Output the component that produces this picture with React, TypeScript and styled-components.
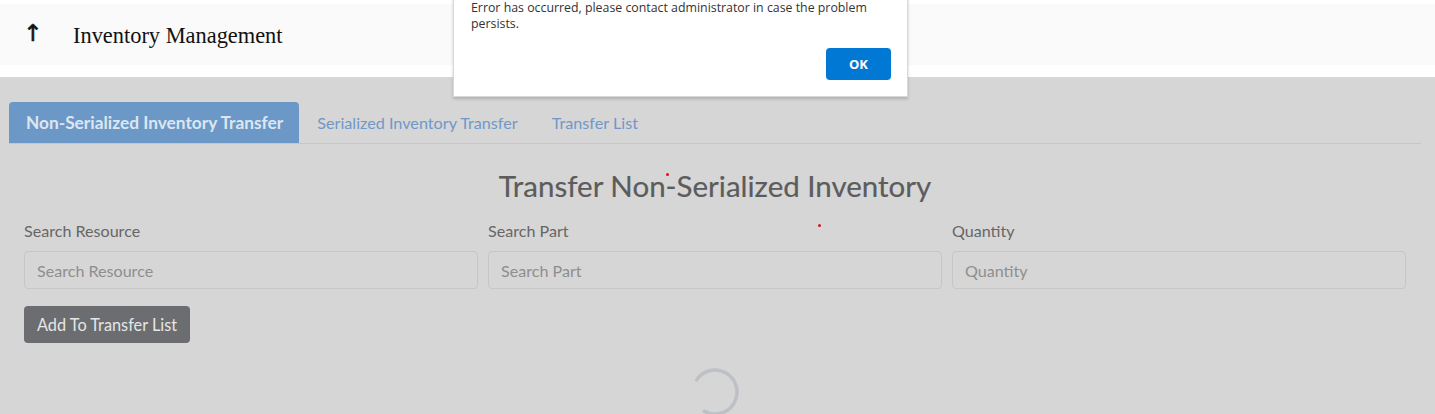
import React from "react";
import styled, { createGlobalStyle } from "styled-components";

const Global = createGlobalStyle`
  html, body { margin: 0; padding: 0; background: #ffffff; overflow: hidden; }
  body { font-family: Lato, "Noto Sans", sans-serif; }
  * { box-sizing: border-box; }
`;

const Page = styled.div`
  position: relative;
  width: 1435px;
  height: 414px;
  overflow: hidden;
  background: #ffffff;
  padding-top: 4px;
`;

const Header = styled.header`
  height: 61px;
  background: #fafafa;
  display: flex;
  align-items: center;
  padding-left: 23px;
  gap: 34px;
  font-family: "Liberation Serif", "DejaVu Serif", serif;
  color: #111;
`;

const BackArrow = styled.span`
  font-family: "DejaVu Sans", sans-serif;
  font-size: 23px;
  line-height: 1;
  width: 16px;
  margin-top: -3px;
  -webkit-text-stroke: 0.6px #111;
`;

const HeaderTitle = styled.h1`
  margin: 2px 0 0;
  font-size: 22.4px;
  font-weight: 400;
`;

const Spacer = styled.div`
  height: 12px;
`;

const Main = styled.main`
  background: #d6d6d6;
  height: 337px;
  padding: 25px 14px 0 9px;
`;

const TabBar = styled.nav`
  display: flex;
  align-items: flex-end;
  border-bottom: 1px solid #c6c6c6;
  height: 42px;
`;

const Tab = styled.div<{ $active?: boolean }>`
  height: 41px;
  display: flex;
  align-items: center;
  padding: 0 ${(p) => (p.$active ? "16px 0 17px" : "17px")};
  border-radius: 4px 4px 0 0;
  font-size: ${(p) => (p.$active ? "17.3px" : "16.2px")};
  font-weight: ${(p) => (p.$active ? 700 : 400)};
  background: ${(p) => (p.$active ? "#6c98c7" : "transparent")};
  color: ${(p) => (p.$active ? "#dde6f0" : "#6f98c9")};
  margin-right: ${(p) => (p.$active ? "1px" : "0")};
`;

const Content = styled.section`
  padding: 0 15px;
`;

const Title = styled.h2`
  margin: 24px 0 17px;
  text-align: center;
  font-size: 29.5px;
  font-weight: 400;
  color: #5c5c5c;
  line-height: 36px;
  -webkit-text-stroke: 0.2px #5c5c5c;
`;

const FieldRow = styled.div`
  display: grid;
  grid-template-columns: repeat(3, 1fr);
  gap: 10px;
`;

const Field = styled.div`
  display: flex;
  flex-direction: column;
  gap: 10px;
`;

const Label = styled.label`
  font-size: 16.1px;
  color: #666666;
  line-height: 20px;
`;

const Input = styled.input`
  height: 38px;
  border: 1px solid #c6c6c6;
  border-radius: 4px;
  background: #d6d6d6;
  padding: 0 12px;
  font-family: Lato, "Noto Sans", sans-serif;
  font-size: 16.1px;
  color: #555;
  outline: none;
  &::placeholder { color: #8e8e8e; }
`;

const AddButton = styled.button`
  margin-top: 17px;
  height: 37px;
  padding: 0 13px 0 13px;
  border: none;
  border-radius: 4px;
  background: #6b6d70;
  color: #e6e6e6;
  font-family: Lato, "Noto Sans", sans-serif;
  font-size: 16.3px;
`;

const SpinnerWrap = styled.div`
  display: flex;
  justify-content: center;
  margin-top: 24px;
`;

const Dialog = styled.div`
  position: absolute;
  left: 453px;
  top: -9px;
  width: 455px;
  background: #ffffff;
  border: 1px solid #d9d9d9;
  box-shadow: 0 2px 3px rgba(0, 0, 0, 0.18);
  padding: 8px 16px 16px 17px;
  display: flex;
  flex-direction: column;
  gap: 16px;
`;

const DialogText = styled.p`
  margin: 0;
  font-family: "Open Sans", "Noto Sans", sans-serif;
  font-size: 12.35px;
  line-height: 16px;
  color: #333333;
`;

const DialogActions = styled.div`
  display: flex;
  justify-content: flex-end;
`;

const OkButton = styled.button`
  width: 65px;
  height: 32px;
  border: none;
  border-radius: 4px;
  background: #0078d4;
  color: #ffffff;
  font-family: "Open Sans", "Noto Sans", sans-serif;
  font-weight: 700;
  font-size: 13px;
`;

const Dot = styled.span`
  position: absolute;
  width: 3px;
  height: 3px;
  border-radius: 50%;
  background: #e01010;
`;

export default function App() {
  return (
    <>
      <Global />
      <Page>
        <Header>
          <BackArrow>↑</BackArrow>
          <HeaderTitle>Inventory Management</HeaderTitle>
        </Header>
        <Spacer />
        <Main>
          <TabBar>
            <Tab $active>Non-Serialized Inventory Transfer</Tab>
            <Tab>Serialized Inventory Transfer</Tab>
            <Tab>Transfer List</Tab>
          </TabBar>
          <Content>
            <Title>Transfer Non-Serialized Inventory</Title>
            <FieldRow>
              <Field>
                <Label>Search Resource</Label>
                <Input placeholder="Search Resource" />
              </Field>
              <Field>
                <Label>Search Part</Label>
                <Input placeholder="Search Part" />
              </Field>
              <Field>
                <Label>Quantity</Label>
                <Input placeholder="Quantity" />
              </Field>
            </FieldRow>
            <AddButton>Add To Transfer List</AddButton>
            <SpinnerWrap>
              <svg width="50" height="50" viewBox="0 0 50 50">
                <circle
                  cx="25"
                  cy="25"
                  r="22"
                  fill="none"
                  stroke="#bdc1c6"
                  strokeWidth="3.5"
                  strokeDasharray="104 34"
                  transform="rotate(210 25 25)"
                />
              </svg>
            </SpinnerWrap>
          </Content>
        </Main>
        <Dot style={{ left: 666, top: 173 }} />
        <Dot style={{ left: 818, top: 224 }} />
        <Dialog>
          <DialogText>
            Error has occurred, please contact administrator in case the problem persists.
          </DialogText>
          <DialogActions>
            <OkButton>OK</OkButton>
          </DialogActions>
        </Dialog>
      </Page>
    </>
  );
}
